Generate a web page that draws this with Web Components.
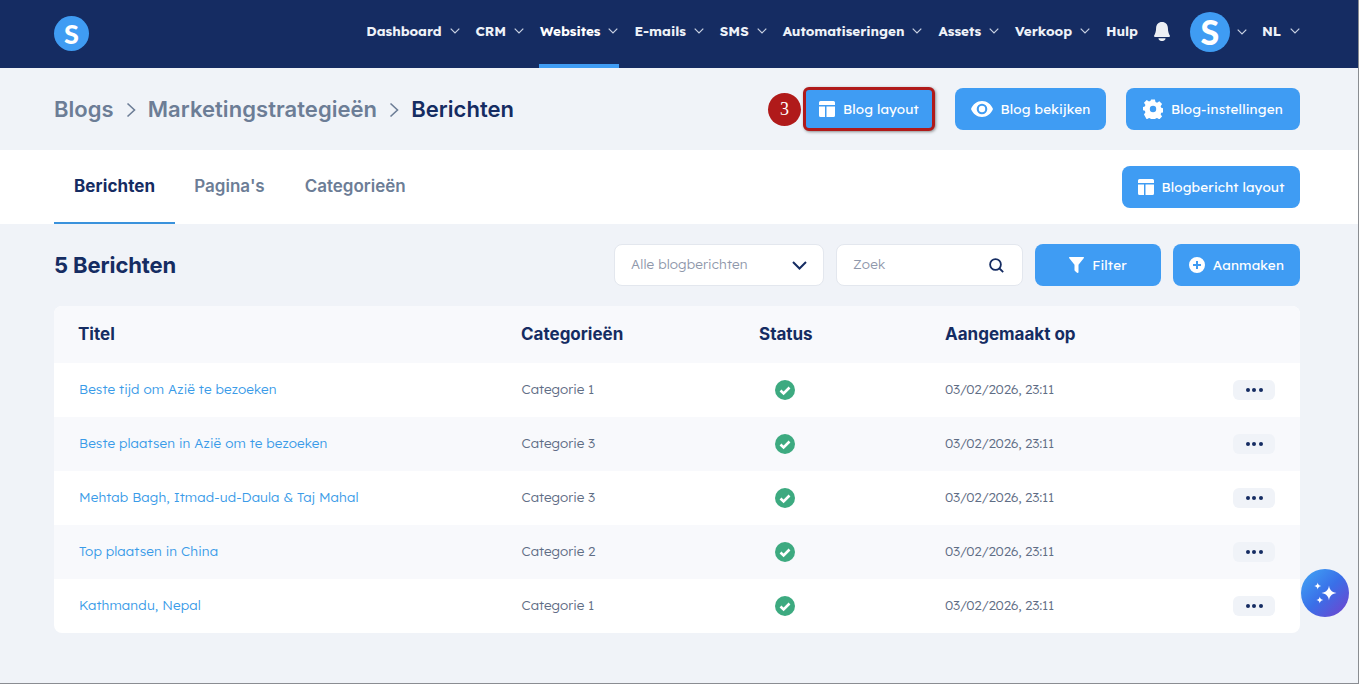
<!DOCTYPE html>
<html lang="nl">
<head>
<meta charset="utf-8">
<title>Berichten</title>
<style>
    html, body { margin: 0; padding: 0; height: 100%; overflow: hidden; background: #f0f3f8; }
    body { font-family: "Lato", "Noto Sans", sans-serif; color: #152c62; }
</style>
</head>
<body>
<app-page>
    <app-header slot="header"></app-header>
    <crumb-bar>
        <crumb-link>Blogs</crumb-link>
        <crumb-link>Marketingstrategieën</crumb-link>
        <crumb-link current>Berichten</crumb-link>
        <action-button slot="actions" icon="layout" marked>Blog layout</action-button>
        <action-button slot="actions" icon="eye" style="margin-left:20px;width:151px">Blog bekijken</action-button>
        <action-button slot="actions" icon="gear" style="margin-left:20px;width:174px">Blog-instellingen</action-button>
    </crumb-bar>
    <tab-bar>
        <tab-item active>Berichten</tab-item>
        <tab-item style="margin-left:-1px">Pagina's</tab-item>
        <tab-item>Categorieën</tab-item>
        <action-button slot="actions" icon="layout" style="width:178px">Blogbericht layout</action-button>
    </tab-bar>
    <list-toolbar></list-toolbar>
    <posts-table>
        <post-row title="Beste tijd om Azië te bezoeken" category="Categorie 1"></post-row>
        <post-row title="Beste plaatsen in Azië om te bezoeken" category="Categorie 3"></post-row>
        <post-row title="Mehtab Bagh, Itmad-ud-Daula &amp; Taj Mahal" category="Categorie 3"></post-row>
        <post-row title="Top plaatsen in China" category="Categorie 2"></post-row>
        <post-row title="Kathmandu, Nepal" category="Categorie 1"></post-row>
    </posts-table>
    <assist-button></assist-button>
</app-page>

<script>
const icons = {
    layout: `<svg width="16" height="16" viewBox="0 0 16 16" fill="#fff"><path d="M1.500 0h13A1.500 1.500 0 0 1 16 1.500V4H0V1.500A1.500 1.500 0 0 1 1.500 0zM0 5.500h6V16H1.500A1.500 1.500 0 0 1 0 14.500zM7.500 5.500H16v9a1.500 1.500 0 0 1-1.500 1.500h-7z"/></svg>`,
    eye: `<svg width="22" height="16" viewBox="0 0 22 16"><path fill="#fff" d="M11 0C6 0 2 3.200 0 8c2 4.800 6 8 11 8s9-3.200 11-8c-2-4.800-6-8-11-8zm0 13.300A5.300 5.300 0 1 1 11 2.700a5.300 5.300 0 0 1 0 10.600z"/><circle cx="11" cy="8" r="3.200" fill="#fff"/></svg>`,
    gear: `<svg width="20" height="20" viewBox="0 0 24 24"><path fill="#fff" fill-rule="evenodd" d="M9.600 0h4.800l.7 3.300 1.900.8 2.900-1.800 3.400 3.400-1.800 2.900.8 1.900 3.300.7v4.800l-3.300.7-.8 1.900 1.800 2.900-3.400 3.400-2.900-1.800-1.900.8-.7 3.300H9.600l-.7-3.300-1.900-.8-2.900 1.800L.7 18.900l1.800-2.900-.8-1.900L-1 13.400V9.600l2.700-.7.800-1.900L.7 4.100 4.100.7 7 2.500l1.900-.8zM12 8a4 4 0 1 0 0 8 4 4 0 0 0 0-8z" transform="translate(.5 .5) scale(.96)"/></svg>`,
    filter: `<svg width="15" height="16" viewBox="0 0 15 16"><path fill="#fff" d="M.6 0h13.800c.5 0 .8.600.5 1L9.500 7.800V15c0 .800-.900 1.200-1.500.7L6 14c-.3-.2-.5-.6-.5-1V7.800L.1 1C-.2.600.1 0 .6 0z"/></svg>`,
    plus: `<svg width="16" height="16" viewBox="0 0 16 16"><path fill="#fff" fill-rule="evenodd" d="M8 0a8 8 0 1 1 0 16A8 8 0 0 1 8 0zM7 4v3H4v2h3v3h2V9h3V7H9V4z"/></svg>`
}

const chevron = `<svg width="10" height="6" viewBox="0 0 10 6" fill="none" stroke="#c9d2e2" stroke-width="1.200"><path d="M.7.700 5 5l4.300-4.300"/></svg>`

const bodyFont = `"Lexend", "Lato", sans-serif`

class AppPage extends HTMLElement {
    constructor() {
        super()
        this.attachShadow({ mode: "open" })
        this.shadowRoot.innerHTML = `
            <style>
                :host { display: block; width: 1358px; height: 683px; border-right: 1px solid #8a8d92; border-bottom: 1px solid #8a8d92; background: #f0f3f8; position: relative; overflow: hidden; }
            </style>
            <slot name="header"></slot>
            <slot></slot>
        `
    }
}

class NavItem extends HTMLElement {
    constructor() {
        super()
        this.attachShadow({ mode: "open" })
        this.shadowRoot.innerHTML = `
            <style>
                :host { display: flex; align-items: center; gap: 7px; height: 68px; box-sizing: border-box; padding-bottom: 8px; position: relative; font: 700 13.500px ${bodyFont}; letter-spacing: -.05px; color: #eef2f8; white-space: nowrap; }
                :host([active]) { color: #fff; }
                :host([active])::after { content: ""; position: absolute; left: -1px; right: -1px; bottom: 0; height: 4px; background: #3f9cf3; }
                svg { margin-top: 2px; margin-left: 1px; }
            </style>
            <slot></slot>
            ${this.hasAttribute("plain") ? "" : chevron}
        `
    }
}

class AppHeader extends HTMLElement {
    constructor() {
        super()
        this.attachShadow({ mode: "open" })
        this.shadowRoot.innerHTML = `
            <style>
                :host { display: flex; align-items: center; height: 68px; background: #152c62; padding: 0 58px 0 54px; box-sizing: border-box; }
                nav { display: flex; align-items: center; gap: 16px; margin-left: auto; }
                .avatar { width: 40px; height: 40px; border-radius: 50%; background: #3f9cf3; color: #fff; display: flex; align-items: center; justify-content: center; font: 900 34px "Lato", sans-serif; }
                .logo { width: 35px; height: 35px; font-size: 27px; margin-top: -1px; }
                .me { display: flex; align-items: center; gap: 7px; margin: -5px 0 0 4px; height: 40px; }
                .bell { display: flex; margin-top: -5px; }
            </style>
            <div class="avatar logo">S</div>
            <nav>
                <nav-item>Dashboard</nav-item>
                <nav-item>CRM</nav-item>
                <nav-item active>Websites</nav-item>
                <nav-item>E-mails</nav-item>
                <nav-item>SMS</nav-item>
                <nav-item>Automatiseringen</nav-item>
                <nav-item>Assets</nav-item>
                <nav-item>Verkoop</nav-item>
                <nav-item plain>Hulp</nav-item>
                <span class="bell">
                    <svg width="16" height="19" viewBox="0 0 16 19"><path fill="#eceff4" d="M8 0c3.600 0 5.800 2.600 5.900 6 .1 3.500.8 5.700 1.800 7.300.5.800 0 1.700-.9 1.700H1.200c-.9 0-1.400-.9-.9-1.700 1-1.600 1.700-3.800 1.800-7.300C2.200 2.600 4.400 0 8 0z"/><path fill="#eceff4" d="M4.800 16.300h6.400c.3 0 .5.300.3.600-.7 1.300-2 2.100-3.500 2.100s-2.800-.8-3.500-2.100c-.2-.3 0-.6.300-.6z"/></svg>
                </span>
                <span class="me"><span class="avatar">S</span>${chevron}</span>
                <nav-item style="gap:8px;margin-left:-1px">NL</nav-item>
            </nav>
        `
    }
}

class CrumbLink extends HTMLElement {
    constructor() {
        super()
        this.attachShadow({ mode: "open" })
        this.shadowRoot.innerHTML = `
            <style>
                :host { display: inline-flex; align-items: center; color: #6c7d96; }
                :host([current]) { color: #152c62; }
                :host([current]) svg { display: none; }
                svg { margin: 2px 12px 0 12px; }
            </style>
            <slot></slot>
            <svg width="10" height="16" viewBox="0 0 10 16" fill="none" stroke="#6c7d96" stroke-width="1.600"><path d="m1.500 1.500 7 6.500-7 6.500"/></svg>
        `
    }
}

class CrumbBar extends HTMLElement {
    constructor() {
        super()
        this.attachShadow({ mode: "open" })
        this.shadowRoot.innerHTML = `
            <style>
                :host { display: flex; align-items: center; height: 82px; padding: 0 58px 0 54px; font: 600 22px "Inter", sans-serif; letter-spacing: .05px; }
                .actions { margin-left: auto; display: flex; align-items: center; letter-spacing: 0; }
            </style>
            <slot></slot>
            <div class="actions"><slot name="actions"></slot></div>
        `
    }
}

class ActionButton extends HTMLElement {
    constructor() {
        super()
        this.attachShadow({ mode: "open" })
        const icon = icons[this.getAttribute("icon")] || ""
        this.shadowRoot.innerHTML = `
            <style>
                :host { display: inline-flex; align-items: center; justify-content: center; gap: 8px; width: 126px; height: 42px; box-sizing: border-box; border-radius: 8px; background: #3f9cf3; color: #fff; font: 400 13.500px ${bodyFont}; letter-spacing: .15px; white-space: nowrap; position: relative; }
                :host([marked]) { width: 132px; height: 44px; border: 3px solid #b01a1a; box-shadow: 1px 1px 3px rgba(40,40,40,.5); border-radius: 6px; }
                svg { flex: none; display: block; }
                span.label { margin-top: -1px; }
                .step { position: absolute; left: -38px; top: 3px; width: 33px; height: 33px; border-radius: 50%; background: #b01a1a; color: #fff; font: 400 18px/33px "Liberation Serif", serif; text-align: center; }
            </style>
            ${this.hasAttribute("marked") ? `<span class="step">3</span>` : ""}
            ${icon}
            <span class="label"><slot></slot></span>
        `
    }
}

class TabItem extends HTMLElement {
    constructor() {
        super()
        this.attachShadow({ mode: "open" })
        this.shadowRoot.innerHTML = `
            <style>
                :host { display: flex; align-items: center; height: 74px; padding: 0 20px; box-sizing: border-box; font: 600 17px "Inter", sans-serif; color: #6c7d96; padding-bottom: 2px; }
                :host([active]) { font-weight: 700; letter-spacing: .1px; color: #152c62; border-bottom: 2px solid #3a92dc; padding-bottom: 0; }
            </style>
            <slot></slot>
        `
    }
}

class TabBar extends HTMLElement {
    constructor() {
        super()
        this.attachShadow({ mode: "open" })
        this.shadowRoot.innerHTML = `
            <style>
                :host { display: flex; align-items: center; height: 74px; background: #fff; padding: 0 58px 0 54px; }
                .actions { margin-left: auto; display: flex; }
            </style>
            <slot></slot>
            <div class="actions"><slot name="actions"></slot></div>
        `
    }
}

class ListToolbar extends HTMLElement {
    constructor() {
        super()
        this.attachShadow({ mode: "open" })
        this.shadowRoot.innerHTML = `
            <style>
                :host { display: flex; align-items: center; height: 82px; padding: 0 58px 0 54px; }
                h2 { margin: 0 auto 0 0; font: 700 22px "Inter", sans-serif; color: #152c62; letter-spacing: -.1px; }
                .field { display: flex; align-items: center; justify-content: space-between; height: 42px; box-sizing: border-box; background: #fff; border: 1px solid #e3e7ee; border-radius: 8px; padding: 0 16px 3px; font: 300 13.500px ${bodyFont}; letter-spacing: .15px; color: #8f98ab; }
                .field svg { margin-top: 3px; }
                .select { width: 210px; margin-right: 12px; }
                .search { width: 187px; margin-right: 12px; padding-right: 18px; }
                svg { display: block; }
                .add { width: 127px; margin-left: 12px; }
            </style>
            <h2>5 Berichten</h2>
            <div class="field select">Alle blogberichten
                <svg width="15" height="9" viewBox="0 0 15 9" fill="none" stroke="#152c62" stroke-width="2"><path d="m1 1 6.500 6.500L14 1"/></svg>
            </div>
            <div class="field search">Zoek
                <svg width="15" height="15" viewBox="0 0 15 15" fill="none" stroke="#152c62" stroke-width="1.800"><circle cx="6.500" cy="6.500" r="5.400"/><path d="m10.500 10.500 3.700 3.700"/></svg>
            </div>
            <action-button icon="filter">Filter</action-button>
            <action-button icon="plus" class="add">Aanmaken</action-button>
        `
    }
}

class PostsTable extends HTMLElement {
    constructor() {
        super()
        this.attachShadow({ mode: "open" })
        this.shadowRoot.innerHTML = `
            <style>
                :host { display: block; margin: 0 58px 0 54px; background: #fff; border-radius: 8px; overflow: hidden; }
                .head { display: grid; grid-template-columns: 443px 238px 186px 1fr; align-items: center; height: 56.500px; padding-left: 24px; background: #f8f9fc; font: 700 17px "Inter", sans-serif; color: #152c62; }
                ::slotted(post-row:nth-child(even)) { background: #f8f9fc; }
            </style>
            <div class="head">
                <span>Titel</span><span>Categorieën</span><span>Status</span><span>Aangemaakt op</span>
            </div>
            <slot></slot>
        `
    }
}

class PostRow extends HTMLElement {
    constructor() {
        super()
        this.attachShadow({ mode: "open" })
        this.shadowRoot.innerHTML = `
            <style>
                :host { display: grid; grid-template-columns: 442.500px 237.500px 186px 1fr 42px; align-items: center; height: 54.200px; padding: 0 25px; font: 300 13.500px ${bodyFont}; color: #5f6d85; }
                .text { margin-bottom: 3px; }
                .title { color: #3a9be8; letter-spacing: .11px; }
                .date { letter-spacing: -.22px; }
                .status { display: flex; padding-left: 16px; }
                .more { display: flex; align-items: center; justify-content: center; gap: 2.500px; width: 42px; height: 20px; border-radius: 6px; background: #f0f3f8; }
                .more i { width: 4px; height: 4px; border-radius: 50%; background: #152c62; }
                svg { display: block; }
            </style>
            <span class="text title">${this.getAttribute("title")}</span>
            <span class="text">${this.getAttribute("category")}</span>
            <span class="status">
                <svg width="20" height="20" viewBox="0 0 20 20"><circle cx="10" cy="10" r="10" fill="#3daa80"/><path d="m5.500 10.500 3.100 3L14.500 7.500" fill="none" stroke="#fff" stroke-width="2.600"/></svg>
            </span>
            <span class="text date">03/02/2026, 23:11</span>
            <span class="more"><i></i><i></i><i></i></span>
        `
        this.removeAttribute("title")
    }
}

class AssistButton extends HTMLElement {
    constructor() {
        super()
        this.attachShadow({ mode: "open" })
        this.shadowRoot.innerHTML = `
            <style>
                :host { position: absolute; left: 1301px; top: 569px; width: 48px; height: 48px; border-radius: 50%; background: linear-gradient(135deg, #3f9cf3 10%, #3a6fe8 50%, #6f45cf 95%); display: flex; align-items: center; justify-content: center; }
            </style>
            <svg width="24" height="24" viewBox="0 0 24 24" fill="#fff">
                <path d="M16 4.500c.6 4 2 6.300 7.500 7.500-5.500 1.200-6.900 3.500-7.500 7.500-.6-4-2-6.300-7.500-7.500 5.500-1.200 6.900-3.500 7.500-7.500z"/>
                <path d="M4.700 1.500c.3 2 1 3.100 3.500 3.500-2.500.4-3.200 1.500-3.500 3.500-.3-2-1-3.100-3.500-3.500 2.500-.4 3.200-1.500 3.500-3.500z"/>
                <path d="M6.800 15.500c.3 2 1 3.100 3.500 3.500-2.500.4-3.200 1.500-3.500 3.500-.3-2-1-3.100-3.500-3.500 2.500-.4 3.200-1.500 3.500-3.500z"/>
            </svg>
        `
    }
}

customElements.define("app-page", AppPage)
customElements.define("nav-item", NavItem)
customElements.define("app-header", AppHeader)
customElements.define("crumb-link", CrumbLink)
customElements.define("crumb-bar", CrumbBar)
customElements.define("action-button", ActionButton)
customElements.define("tab-item", TabItem)
customElements.define("tab-bar", TabBar)
customElements.define("list-toolbar", ListToolbar)
customElements.define("posts-table", PostsTable)
customElements.define("post-row", PostRow)
customElements.define("assist-button", AssistButton)
</script>
</body>
</html>
